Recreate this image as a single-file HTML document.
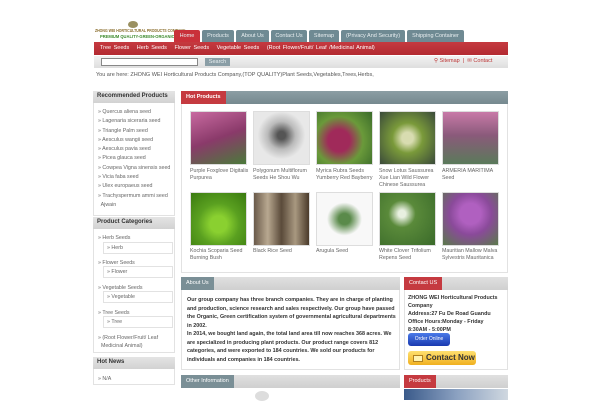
<!DOCTYPE html>
<html><head><style>
*{margin:0;padding:0;box-sizing:border-box}
body{width:600px;height:400px;overflow:hidden;background:#fff;font-family:"Liberation Sans",sans-serif;font-size:5.5px;color:#444;position:relative}
.a{position:absolute}
.tab{position:absolute;top:30px;height:12px;background:#6f8a93;color:#e8eef0;font-size:5.5px;line-height:12px;text-align:center;border-radius:2px 2px 0 0}
.box{position:absolute;border:1px solid #e2e2e2;background:#fff}
.bh{position:absolute;background:linear-gradient(#e4e4e4,#d2d2d2);color:#333;font-weight:bold;font-size:6px;padding-left:4px;line-height:10px}
.li{position:absolute;left:98px;font-size:5.3px;color:#666}
.img{position:absolute;width:57px;height:54px;border:1px solid #ddd}
.cap{position:absolute;font-size:5.3px;color:#666;line-height:7px;width:60px}
.rh{position:absolute;height:13px;line-height:13px;color:#fff;font-size:5.5px;padding:0 5px}
</style></head><body>
<!-- logo -->
<div class="a" style="left:128px;top:21px;width:10px;height:7px;background:#9a9060;border-radius:50%"></div>
<div class="a" style="left:95px;top:28px;width:77px;font-size:4.5px;color:#8a6d2c;font-weight:bold;white-space:nowrap;transform:scaleX(0.78);transform-origin:left">ZHONG WEI HORTICULTURAL PRODUCTS COMPANY</div>
<div class="a" style="left:100px;top:35px;font-size:4.8px;color:#3c8a2c;font-weight:bold;white-space:nowrap;transform:scaleX(0.85);transform-origin:left">PREMIUM QUALITY-GREEN-ORGANIC</div>
<!-- tabs -->
<div class="tab" style="left:174px;width:26px;background:#c9313a">Home</div>
<div class="tab" style="left:202px;width:32px">Products</div>
<div class="tab" style="left:236px;width:33px">About Us</div>
<div class="tab" style="left:271px;width:36px">Contact Us</div>
<div class="tab" style="left:309px;width:30px">Sitemap</div>
<div class="tab" style="left:341px;width:64px">(Privacy And Security)</div>
<div class="tab" style="left:407px;width:57px">Shipping Container</div>
<div class="a" style="left:94px;top:42px;width:414px;height:13px;background:linear-gradient(#c53a40,#b32a31);color:#fff;font-size:5.5px;line-height:13px;padding-left:6px;word-spacing:1px">Tree Seeds &nbsp; Herb Seeds &nbsp; Flower Seeds &nbsp; Vegetable Seeds &nbsp; (Root Flower/Fruit/ Leaf /Medicinal Animal)</div>
<div class="a" style="left:94px;top:56px;width:414px;height:12px;background:linear-gradient(#f2f2f2,#dedede)"></div>
<div class="a" style="left:101px;top:58px;width:97px;height:8px;background:#fff;border:1px solid #888"></div>
<div class="a" style="left:205px;top:58px;width:25px;height:8px;background:#8a9ea6;color:#e8eef0;font-size:5.5px;line-height:8px;text-align:center">Search</div>
<div class="a" style="left:434px;top:58px;font-size:5.5px;color:#b33;">⚲ Sitemap &nbsp;| &nbsp;✉ Contact</div>
<div class="a" style="left:96px;top:72px;font-size:5.5px;color:#555">You are here: ZHONG WEI Horticultural Products Company,(TOP QUALITY)Plant Seeds,Vegetables,Trees,Herbs,</div>
<!-- left -->
<div class="box" style="left:93px;top:91px;width:82px;height:125px"></div>
<div class="bh" style="left:93px;top:91px;width:82px;height:12px">Recommended Products</div>
<div class="li" style="top:108px;line-height:9.3px">» Quercus aliena seed<br>» Lagenaria siceraria seed<br>» Triangle Palm seed<br>» Aesculus wangii seed<br>» Aesculus pavia seed<br>» Picea glauca seed<br>» Cowpea Vigna sinensis seed<br>» Vicia faba seed<br>» Ulex europaeus seed<br>» Trachyspermum ammi seed<br>&nbsp; Ajwain</div>
<div class="box" style="left:93px;top:217px;width:82px;height:136px"></div>
<div class="bh" style="left:93px;top:217px;width:82px;height:12px">Product Categories</div>
<div class="li" style="top:235px">» Herb Seeds</div>
<div class="box" style="left:103px;top:242px;width:70px;height:12px"></div><div class="li" style="left:107px;top:245px">» Herb</div>
<div class="li" style="top:260px">» Flower Seeds</div>
<div class="box" style="left:103px;top:266px;width:70px;height:12px"></div><div class="li" style="left:107px;top:269px">» Flower</div>
<div class="li" style="top:285px">» Vegetable Seeds</div>
<div class="box" style="left:103px;top:291px;width:70px;height:12px"></div><div class="li" style="left:107px;top:294px">» Vegetable</div>
<div class="li" style="top:310px">» Tree Seeds</div>
<div class="box" style="left:103px;top:316px;width:70px;height:12px"></div><div class="li" style="left:107px;top:319px">» Tree</div>
<div class="li" style="top:335px;line-height:7.5px">» (Root Flower/Fruit/ Leaf<br>&nbsp; Medicinal Animal)</div>
<div class="box" style="left:93px;top:357px;width:82px;height:28px"></div>
<div class="bh" style="left:93px;top:357px;width:82px;height:12px">Hot News</div>
<div class="li" style="top:376px">» N/A</div>
<!-- hot products -->
<div class="box" style="left:181px;top:91px;width:327px;height:182px"></div>
<div class="a" style="left:181px;top:91px;width:327px;height:13px;background:linear-gradient(#8c9ea4,#76898f)"></div>
<div class="rh" style="left:181px;top:91px;background:#c53a40;font-weight:bold">Hot Products</div>
<div class="img" style="left:190px;top:111px;background:linear-gradient(160deg,#c86aa0,#8a3a6a 50%,#4a7a3a)"></div>
<div class="img" style="left:253px;top:111px;background:radial-gradient(circle at 50% 45%,#555 10%,#bbb 35%,#e8e8e8 60%)"></div>
<div class="img" style="left:316px;top:111px;background:radial-gradient(circle at 40% 55%,#a02a5a 25%,#6a9a3a 55%,#3a6a2a)"></div>
<div class="img" style="left:379px;top:111px;background:radial-gradient(circle at 50% 50%,#d8dcb0 15%,#7a9a3a 40%,#3a4a3a)"></div>
<div class="img" style="left:442px;top:111px;background:linear-gradient(#c87aa8,#8a5a7a 45%,#5a7a5a)"></div>
<div class="cap" style="left:190px;top:168px">Purple Foxglove Digitalis Purpurea</div>
<div class="cap" style="left:253px;top:168px">Polygonum Multiflorum Seeds He Shou Wu</div>
<div class="cap" style="left:316px;top:168px">Myrica Rubra Seeds Yumberry Red Bayberry</div>
<div class="cap" style="left:379px;top:168px">Snow Lotus Saussurea Xue Lian Wild Flower Chinese Saussurea</div>
<div class="cap" style="left:442px;top:168px">ARMERIA MARITIMA Seed</div>
<div class="img" style="left:190px;top:192px;background:radial-gradient(circle at 50% 60%,#8ad030 20%,#5aa020 50%,#3a7a10)"></div>
<div class="img" style="left:253px;top:192px;background:linear-gradient(90deg,#6a5a4a,#b8a890,#5a4a3a,#a89880,#4a3a2a)"></div>
<div class="img" style="left:316px;top:192px;background:radial-gradient(ellipse at 50% 50%,#5a8a4a 15%,#f8f8f8 45%)"></div>
<div class="img" style="left:379px;top:192px;background:radial-gradient(circle at 40% 40%,#e8f0e0 8%,#5a8a3a 30%,#3a6a2a)"></div>
<div class="img" style="left:442px;top:192px;background:radial-gradient(circle at 50% 40%,#b060c0 25%,#8a4a9a 50%,#5a7a4a)"></div>
<div class="cap" style="left:190px;top:248px">Kochia Scoparia Seed Burning Bush</div>
<div class="cap" style="left:253px;top:248px">Black Rice Seed</div>
<div class="cap" style="left:316px;top:248px">Arugula Seed</div>
<div class="cap" style="left:379px;top:248px">White Clover Trifolium Repens Seed</div>
<div class="cap" style="left:442px;top:248px">Mauritian Mallow Malva Sylvestris Mauritanica</div>
<!-- about -->
<div class="box" style="left:181px;top:277px;width:219px;height:93px"></div>
<div class="a" style="left:181px;top:277px;width:219px;height:13px;background:linear-gradient(#e0e0e0,#cfcfcf)"></div>
<div class="rh" style="left:181px;top:277px;background:#7a8f96">About Us</div>
<div class="a" style="left:187px;top:296px;width:210px;font-size:5.4px;font-weight:bold;color:#333;line-height:8.5px">Our group company has three branch companies. They are in charge of planting and production, science research and sales respectively. Our group have passed the Organic, Green certification system of governmental agricultural departments in 2002.<br>In 2014, we bought land again, the total land area till now reaches 368 acres. We are specialized in producing plant products. Our product range covers 812 categories, and were exported to 184 countries. We sold our products for individuals and companies in 184 countries.</div>
<div class="box" style="left:404px;top:277px;width:104px;height:93px"></div>
<div class="a" style="left:404px;top:277px;width:104px;height:13px;background:linear-gradient(#e0e0e0,#cfcfcf)"></div>
<div class="rh" style="left:404px;top:277px;background:#c53a40">Contact US</div>
<div class="a" style="left:408px;top:294px;width:98px;font-size:5.4px;font-weight:bold;color:#333;line-height:8px">ZHONG WEI Horticultural Products Company<br>Address:27 Fu De Road Guandu<br>Office Hours:Monday - Friday<br>8:30AM - 5:00PM</div>
<div class="a" style="left:408px;top:333px;width:42px;height:13px;border-radius:3px;background:linear-gradient(#4a7ae8,#1a3ab0);color:#fff;font-size:5px;text-align:center;line-height:13px">Order Online</div>
<div class="a" style="left:408px;top:351px;width:68px;height:14px;border-radius:3px;background:linear-gradient(#ffe070,#f0b020);color:#333;font-size:8px;font-weight:bold;line-height:14px;padding-left:18px">Contact Now</div>
<div class="a" style="left:413px;top:355px;width:10px;height:7px;border:1px solid #b08020;background:#fff3b0"></div>
<div class="a" style="left:181px;top:375px;width:219px;height:13px;background:linear-gradient(#e0e0e0,#cfcfcf)"></div>
<div class="rh" style="left:181px;top:375px;background:#7a8f96">Other Information</div>
<div class="a" style="left:404px;top:375px;width:104px;height:13px;background:linear-gradient(#e0e0e0,#cfcfcf)"></div>
<div class="rh" style="left:404px;top:375px;background:#c53a40">Products</div>
<div class="a" style="left:404px;top:389px;width:104px;height:11px;background:linear-gradient(90deg,#3a5a8a,#8aa0c0,#d0d8e0)"></div>
<div class="a" style="left:255px;top:391px;width:14px;height:10px;border-radius:50%;background:#ddd"></div>
</body></html>
